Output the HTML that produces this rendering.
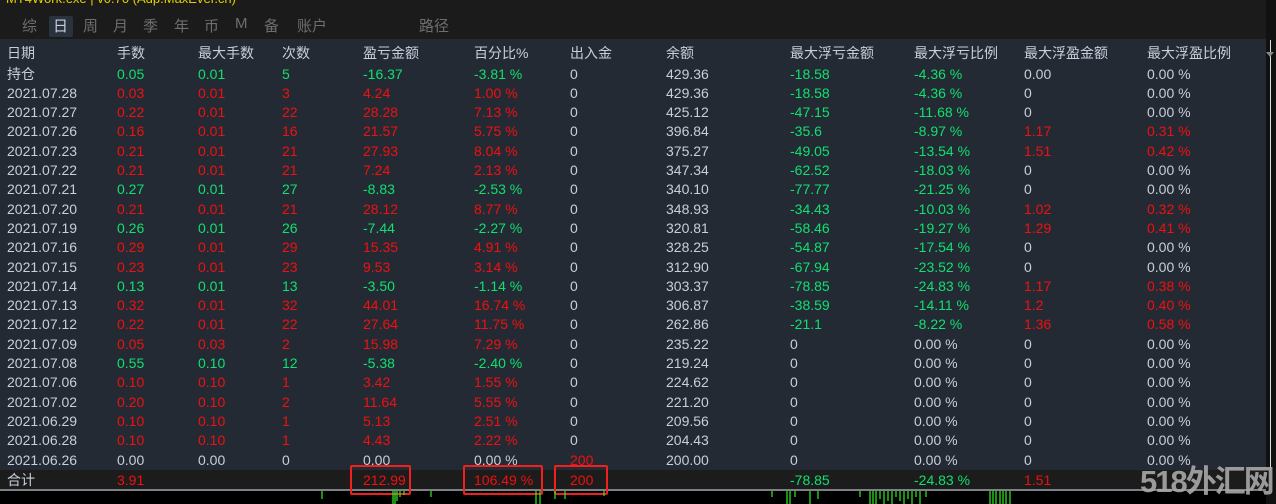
<!DOCTYPE html><html><head><meta charset="utf-8"><style>
html,body{margin:0;width:1276px;height:504px;overflow:hidden}
body{background:#000;font-family:"Liberation Sans","Noto Sans CJK SC",sans-serif;font-size:14px;position:relative}
.top{position:absolute;left:0;top:0;width:1266px;height:39px;background:#1b1b1b}
.yl{position:absolute;left:6px;top:-9px;color:#e0d000;font-size:13px}
.tab{position:absolute;top:15px;color:#6e6e6e;font-size:15px}
.sel{position:absolute;left:49px;top:16px;width:24px;height:21px;background:#2a323d;border-radius:2px}
.tbl{position:absolute;left:0;top:39px;width:1266px;height:431px;background:#242a33}
.tot{position:absolute;left:0;top:470px;width:1266px;height:19px;background:#1c1c1c;border-bottom:2px solid #7c8088}
.r{position:absolute;left:0;width:1266px;height:19.3px;line-height:19.3px;color:#c6cfdc}
.r span{position:absolute;white-space:nowrap}
.g{color:#10e070}.d{color:#f01010}
.box{position:absolute;border:2px solid #f0201c;border-radius:2px}
.sb{position:absolute;left:1266px;top:0;width:10px;height:504px;background:#111}
.wm{position:absolute;left:1140px;top:464px;font-size:31px;line-height:36px;font-weight:bold;color:#a8a8a8;letter-spacing:-2px;white-space:nowrap;opacity:.9}
</style></head><body>
<div class="top"><div class="yl">MT4Work.exe | v0.70 (Adp.MaxEver.cn)</div>
<div class="sel"></div>
<span class="tab" style="left:22px">综</span><span class="tab" style="left:53px;color:#c6cfdc">日</span><span class="tab" style="left:83px">周</span><span class="tab" style="left:113px">月</span><span class="tab" style="left:143px">季</span><span class="tab" style="left:174px">年</span><span class="tab" style="left:204px">币</span><span class="tab" style="left:235px">M</span><span class="tab" style="left:264px">备</span><span class="tab" style="left:297px">账户</span><span class="tab" style="left:419px">路径</span></div>
<div class="tbl"></div>
<div class="tot"></div>
<div class="sb"><div style="position:absolute;left:4px;top:40px;width:1px;height:430px;background:#ddd"></div><div style="position:absolute;left:0;top:52px;border:4px solid transparent;border-top:5px solid #888"></div></div>
<div id="rows"></div>
<div class="box" style="left:350px;top:465px;width:57px;height:26px"></div>
<div class="box" style="left:463px;top:465px;width:76px;height:26px"></div>
<div class="box" style="left:554px;top:465px;width:50px;height:26px"></div>
<svg style="position:absolute;left:0;top:491px" width="1266" height="13"><g stroke="#30f020" stroke-width="1.2">
<path d="M322 0v8M393 0v13M395 0v13M397 0v10M400 0v6M404 0v4M431 0v6M536 0v13M540 0v13M555 0v8M565 0v8M604 0v5M772 0v6M787 0v13M790 0v13M795 0v6M810 0v13M818 0v8M860 0v6M870 0v13M873 0v13M876 0v13M880 0v8M884 0v13M888 0v10M892 0v13M896 0v6M900 0v10M904 0v13M908 0v8M912 0v13M916 0v6M920 0v13M926 0v6M990 0v13M993 0v13M996 0v13M1000 0v13M1003 0v13M1006 0v13M1010 0v13"/></g></svg>
<div class="wm">518外汇网</div>
<script>
const X=[7,117,198,282,363,474,570,666,790,914,1024,1147];
const H=["日期","手数","最大手数","次数","盈亏金额","百分比%","出入金","余额","最大浮亏金额","最大浮亏比例","最大浮盈金额","最大浮盈比例"];
const D=[
["持仓","g0.05","g0.01","g5","g-16.37","g-3.81 %","0","429.36","g-18.58","g-4.36 %","0.00","0.00 %"],
["2021.07.28","d0.03","d0.01","d3","d4.24","d1.00 %","0","429.36","g-18.58","g-4.36 %","0","0.00 %"],
["2021.07.27","d0.22","d0.01","d22","d28.28","d7.13 %","0","425.12","g-47.15","g-11.68 %","0","0.00 %"],
["2021.07.26","d0.16","d0.01","d16","d21.57","d5.75 %","0","396.84","g-35.6","g-8.97 %","d1.17","d0.31 %"],
["2021.07.23","d0.21","d0.01","d21","d27.93","d8.04 %","0","375.27","g-49.05","g-13.54 %","d1.51","d0.42 %"],
["2021.07.22","d0.21","d0.01","d21","d7.24","d2.13 %","0","347.34","g-62.52","g-18.03 %","0","0.00 %"],
["2021.07.21","g0.27","g0.01","g27","g-8.83","g-2.53 %","0","340.10","g-77.77","g-21.25 %","0","0.00 %"],
["2021.07.20","d0.21","d0.01","d21","d28.12","d8.77 %","0","348.93","g-34.43","g-10.03 %","d1.02","d0.32 %"],
["2021.07.19","g0.26","g0.01","g26","g-7.44","g-2.27 %","0","320.81","g-58.46","g-19.27 %","d1.29","d0.41 %"],
["2021.07.16","d0.29","d0.01","d29","d15.35","d4.91 %","0","328.25","g-54.87","g-17.54 %","0","0.00 %"],
["2021.07.15","d0.23","d0.01","d23","d9.53","d3.14 %","0","312.90","g-67.94","g-23.52 %","0","0.00 %"],
["2021.07.14","g0.13","g0.01","g13","g-3.50","g-1.14 %","0","303.37","g-78.85","g-24.83 %","d1.17","d0.38 %"],
["2021.07.13","d0.32","d0.01","d32","d44.01","d16.74 %","0","306.87","g-38.59","g-14.11 %","d1.2","d0.40 %"],
["2021.07.12","d0.22","d0.01","d22","d27.64","d11.75 %","0","262.86","g-21.1","g-8.22 %","d1.36","d0.58 %"],
["2021.07.09","d0.05","d0.03","d2","d15.98","d7.29 %","0","235.22","0","0.00 %","0","0.00 %"],
["2021.07.08","g0.55","g0.10","g12","g-5.38","g-2.40 %","0","219.24","0","0.00 %","0","0.00 %"],
["2021.07.06","d0.10","d0.10","d1","d3.42","d1.55 %","0","224.62","0","0.00 %","0","0.00 %"],
["2021.07.02","d0.20","d0.10","d2","d11.64","d5.55 %","0","221.20","0","0.00 %","0","0.00 %"],
["2021.06.29","d0.10","d0.10","d1","d5.13","d2.51 %","0","209.56","0","0.00 %","0","0.00 %"],
["2021.06.28","d0.10","d0.10","d1","d4.43","d2.22 %","0","204.43","0","0.00 %","0","0.00 %"],
["2021.06.26","0.00","0.00","0","0.00","0.00 %","d200","200.00","0","0.00 %","0","0.00 %"],
["合计","d3.91","","","d212.99","d106.49 %","d200","","g-78.85","g-24.83 %","d1.51","d"]];
let h="";
function row(top,cells){h+=`<div class="r" style="top:${top}px">`;cells.forEach((c,i)=>{let cl="";if(c[0]=="g"||c[0]=="d"){cl=c[0];c=c.slice(1);}h+=`<span class="${cl}" style="left:${X[i]}px">${c}</span>`});h+="</div>";}
row(43.5,H);
D.forEach((r,i)=>row(i==21?470.5:64.5+i*19.3,r));
document.getElementById("rows").innerHTML=h;
</script>
</body></html>
